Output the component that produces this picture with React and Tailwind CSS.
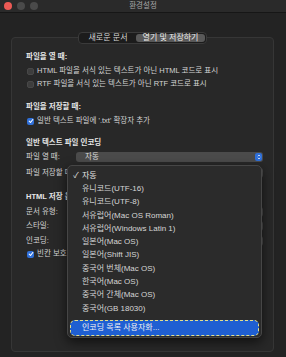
import React from "react";

const FONT = { fontFamily: '"Liberation Sans", "Noto Sans CJK KR", sans-serif' };

const ENCODINGS = [
  "유니코드(UTF-16)",
  "유니코드(UTF-8)",
  "서유럽어(Mac OS Roman)",
  "서유럽어(Windows Latin 1)",
  "일본어(Mac OS)",
  "일본어(Shift JIS)",
  "중국어 번체(Mac OS)",
  "한국어(Mac OS)",
  "중국어 간체(Mac OS)",
  "중국어(GB 18030)",
];

function Check({ checked }) {
  return checked ? (
    <span className="w-[7px] h-[7px] rounded-[2px] bg-[#2f6fd8] flex items-center justify-center shrink-0">
      <svg width="6" height="6" viewBox="0 0 10 10">
        <path d="M2 5.2 L4.2 7.5 L8 2.5" stroke="#fff" strokeWidth="1.8" fill="none" strokeLinecap="round" strokeLinejoin="round" />
      </svg>
    </span>
  ) : (
    <span className="w-[7px] h-[7px] rounded-[2px] bg-[#3d3d3d] border border-[#484848] shrink-0" />
  );
}

function Popup({ value }) {
  return (
    <div className="ml-auto w-[187px] h-[10px] rounded-[3px] bg-[#4b4b4b] flex items-center pl-[9px] pr-[1px]">
      <span className="text-[7.5px] text-[#dcdcdc] leading-none">{value}</span>
      <span className="ml-auto w-[7px] h-[8px] rounded-[2px] bg-[#2f6fd8] flex items-center justify-center">
        <svg width="4" height="6" viewBox="0 0 4 6">
          <path d="M0.8 2.2 L2 1 L3.2 2.2 M0.8 3.8 L2 5 L3.2 3.8" stroke="#fff" strokeWidth="0.7" fill="none" />
        </svg>
      </span>
    </div>
  );
}

export default function App() {
  return (
    <div style={FONT} className="w-[286px] h-[357px] bg-[#1f1f1f] overflow-hidden relative text-[#d4d4d4] text-[7.5px] leading-none">
      {/* title bar */}
      <div className="h-[13px] bg-[#2a2a2a] border-b border-[#161616] relative flex items-center px-[4px] gap-[5px]">
        <span className="w-[8px] h-[8px] rounded-full bg-[#ec5a55]" />
        <span className="w-[8px] h-[8px] rounded-full bg-[#4a4a4a]" />
        <span className="w-[8px] h-[8px] rounded-full bg-[#4a4a4a]" />
        <span className="absolute inset-0 flex items-center justify-center text-[7.5px] text-[#a8a8a8]">환경설정</span>
      </div>

      <div className="bg-[#232323] h-[344px] px-[11px] pt-[24px] relative">
        {/* tabs */}
        <div className="absolute left-[78px] top-[19px] z-10 w-[129px] h-[12px] rounded-[4px] bg-[#1c1c1c] border border-[#3a3a3a] flex items-center p-[1px]">
          <span className="w-[56px] text-center text-[8px] text-[#d8d8d8]">새로운 문서</span>
          <span className="flex-1 h-full rounded-[3px] bg-[#595959] flex items-center justify-center text-[8px] text-[#ececec]">
            열기 및 저장하기
          </span>
        </div>

        {/* panel */}
        <div className="w-[263px] h-[315px] rounded-[4px] bg-[#282828] border border-[#363636] pl-[14px] pr-[10px] pt-[13px] flex flex-col">
          <div className="h-[12px] flex items-center font-bold text-[#e6e6e6]">파일을 열 때:</div>
          <div className="mt-[2px] h-[12px] flex items-center gap-[3px] pl-[1px]">
            <Check />
            <span>HTML 파일을 서식 있는 텍스트가 아닌 HTML 코드로 표시</span>
          </div>
          <div className="mt-[1px] h-[12px] flex items-center gap-[3px] pl-[1px]">
            <Check />
            <span>RTF 파일을 서식 있는 텍스트가 아닌 RTF 코드로 표시</span>
          </div>

          <div className="mt-[11px] h-[12px] flex items-center font-bold text-[#e6e6e6]">파일을 저장할 때:</div>
          <div className="mt-[2px] h-[12px] flex items-center gap-[3px] pl-[1px]">
            <Check checked />
            <span>일반 텍스트 파일에 '.txt' 확장자 추가</span>
          </div>

          <div className="mt-[10px] h-[12px] flex items-center font-bold text-[#e6e6e6]">일반 텍스트 파일 인코딩</div>
          <div className="mt-[2px] h-[12px] flex items-center">
            <span>파일 열 때:</span>
            <Popup value="자동" />
          </div>
          <div className="mt-[4px] h-[12px] flex items-center">
            <span>파일 저장할 때:</span>
            <Popup />
          </div>

          <div className="mt-[12px] h-[12px] flex items-center font-bold text-[#e6e6e6]">HTML 저장 옵션</div>
          <div className="mt-[3px] h-[12px] flex items-center">
            <span>문서 유형:</span>
            <Popup />
          </div>
          <div className="mt-[2px] h-[12px] flex items-center">
            <span>스타일:</span>
            <Popup />
          </div>
          <div className="mt-[3px] h-[12px] flex items-center">
            <span>인코딩:</span>
            <Popup />
          </div>
          <div className="mt-[1px] h-[12px] flex items-center gap-[3px] pl-[1px]">
            <Check checked />
            <span>빈칸 보호</span>
          </div>
        </div>

        {/* encoding menu */}
        <div className="absolute left-[67px] top-[152px] z-20 w-[195px] h-[173px] rounded-[5px] bg-[#2b2b2b] border border-[#464646] shadow-[0_4px_12px_rgba(0,0,0,0.6)] pt-[3px] px-[2px] flex flex-col text-[8px]">
          <div className="h-[13.3px] flex items-center text-[#e6e6e6]">
            <span className="w-[12px] text-center">✓</span>
            <span>자동</span>
          </div>
          {ENCODINGS.map((e) => (
            <div key={e} className="h-[13.3px] flex items-center pl-[12px] text-[#d6d6d6]">
              {e}
            </div>
          ))}
          <div className="mt-auto mb-[1px] h-[16px] rounded-[5px] bg-[#1f5fd2] border-[1.5px] border-dashed border-[#e2df8e] flex items-center pl-[11px] text-[#f2f2f2]">
            인코딩 목록 사용자화...
          </div>
        </div>
      </div>
    </div>
  );
}
